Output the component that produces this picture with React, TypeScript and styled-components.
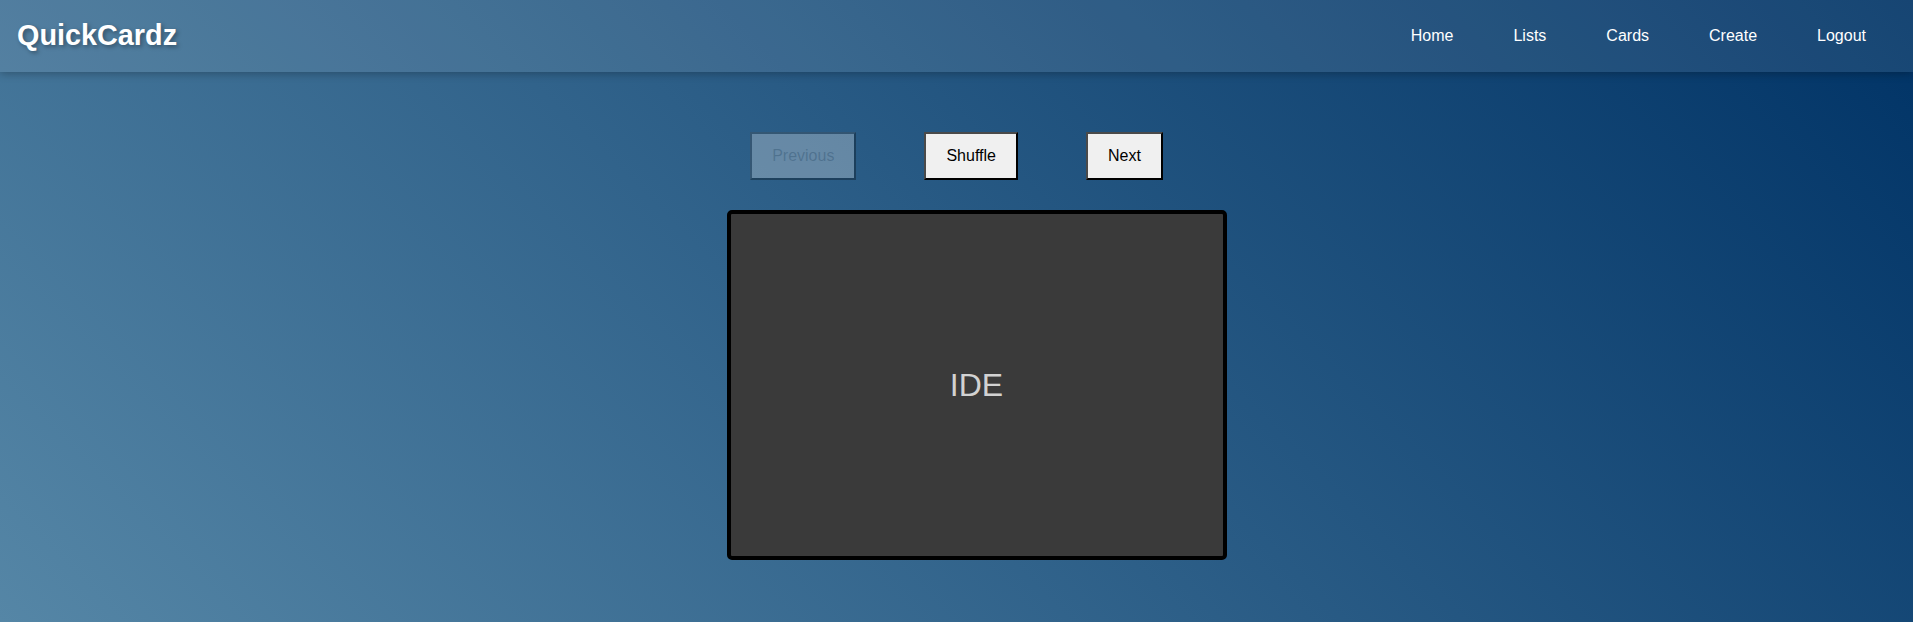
import React from "react";
import styled, { createGlobalStyle } from "styled-components";

const GlobalStyle = createGlobalStyle`
  html, body {
    margin: 0;
    padding: 0;
  }
  body {
    font-family: "Liberation Sans", Arial, sans-serif;
  }
  * {
    box-sizing: border-box;
  }
`;

const Page = styled.div`
  min-height: 100vh;
  background: linear-gradient(45deg, #5586a6 0%, #003366 100%);
  display: flex;
  flex-direction: column;
`;

const Header = styled.header`
  height: 72px;
  display: flex;
  align-items: center;
  justify-content: space-between;
  padding: 0 17px;
  background: rgba(255, 255, 255, 0.09);
  box-shadow: 0 2px 8px rgba(0, 0, 0, 0.25);
`;

const Logo = styled.div`
  color: #ffffff;
  font-size: 28.8px;
  font-weight: 700;
  text-shadow: 2px 2px 4px rgba(0, 0, 0, 0.35);
  margin-top: -2px;
`;

const Nav = styled.nav`
  display: flex;
  align-items: center;
`;

const NavLink = styled.a`
  color: #ffffff;
  font-size: 16px;
  text-decoration: none;
  padding: 8px 30px;
  margin-top: 0;
  cursor: pointer;
`;

const Main = styled.main`
  display: flex;
  flex-direction: column;
  align-items: center;
  padding-top: 60px;
`;

const Controls = styled.div`
  display: flex;
  gap: 68px;
`;

const ControlButton = styled.button`
  font-family: "Liberation Sans", Arial, sans-serif;
  font-size: 16px;
  line-height: 18px;
  padding: 13px 20px;
  background: #f0f0f0;
  color: #000000;
  border-style: solid;
  border-width: 2px;
  border-color: #4a4a4a #000000 #000000 #4a4a4a;
  border-radius: 0;
  cursor: pointer;

  &:disabled {
    opacity: 0.3;
    color: rgba(16, 16, 16, 0.35);
    cursor: default;
  }
`;

const Card = styled.div`
  margin-top: 30px;
  margin-left: 40px;
  width: 500px;
  height: 350px;
  background: #3a3a3a;
  border: 4px solid #000000;
  border-radius: 5px;
  display: flex;
  align-items: center;
  justify-content: center;
  color: #d2d2d2;
  font-size: 32px;
`;

export default function App() {
  const links = ["Home", "Lists", "Cards", "Create", "Logout"];
  return (
    <>
      <GlobalStyle />
      <Page>
        <Header>
          <Logo>QuickCardz</Logo>
          <Nav>
            {links.map((l) => (
              <NavLink key={l}>{l}</NavLink>
            ))}
          </Nav>
        </Header>
        <Main>
          <Controls>
            <ControlButton disabled>Previous</ControlButton>
            <ControlButton>Shuffle</ControlButton>
            <ControlButton>Next</ControlButton>
          </Controls>
          <Card>IDE</Card>
        </Main>
      </Page>
    </>
  );
}
